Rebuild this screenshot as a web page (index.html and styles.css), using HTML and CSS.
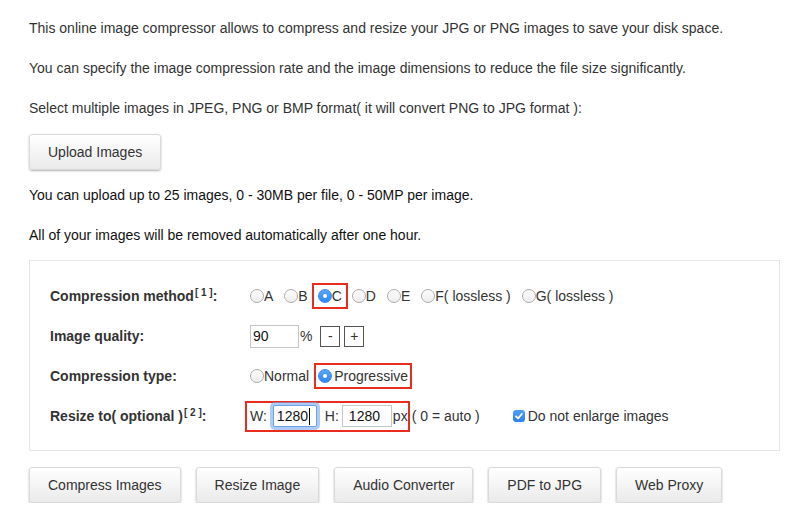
FILE: index.html
```html
<!DOCTYPE html>
<html>
<head>
<meta charset="utf-8">
<link rel="stylesheet" href="styles.css">
</head>
<body>
<div class="page">
  <p class="intro">This online image compressor allows to compress and resize your JPG or PNG images to save your disk space.</p>
  <p class="intro">You can specify the image compression rate and the image dimensions to reduce the file size significantly.</p>
  <p class="intro">Select multiple images in JPEG, PNG or BMP format( it will convert PNG to JPG format ):</p>
  <button class="btn upload">Upload Images</button>
  <p class="note first">You can upload up to 25 images, 0 - 30MB per file, 0 - 50MP per image.</p>
  <p class="note">All of your images will be removed automatically after one hour.</p>

  <div class="panel">
    <div class="row">
      <div class="label">Compression method<sup>[ 1 ]</sup>:</div>
      <div class="ctrl">
        <label class="opt"><span class="radio"></span>A</label>
        <label class="opt"><span class="radio"></span>B</label>
        <label class="opt boxed box-c"><span class="radio on"></span>C</label>
        <label class="opt"><span class="radio"></span>D</label>
        <label class="opt"><span class="radio"></span>E</label>
        <label class="opt"><span class="radio"></span>F( lossless )</label>
        <label class="opt"><span class="radio"></span>G( lossless )</label>
      </div>
    </div>
    <div class="row">
      <div class="label">Image quality:</div>
      <div class="ctrl">
        <span class="field quality">90</span>
        <span class="pct">%</span>
        <span class="step">-</span>
        <span class="step plus">+</span>
      </div>
    </div>
    <div class="row">
      <div class="label">Compression type:</div>
      <div class="ctrl">
        <label class="opt normal"><span class="radio"></span>Normal</label>
        <label class="opt boxed box-p"><span class="radio on"></span>Progressive</label>
      </div>
    </div>
    <div class="row">
      <div class="label">Resize to( optional )<sup>[ 2 ]</sup>:</div>
      <div class="ctrl">
        <span class="resize-box">
          <span>W:</span>
          <span class="field size focus">1280<span class="caret"></span></span>
          <span class="h-lbl">H:</span>
          <span class="field size hfield">1280</span>
          <span class="px">px</span>
        </span>
        <span class="auto">( 0 = auto )</span>
        <label class="check-opt"><span class="check"><svg viewBox="0 0 12 12" width="12" height="12"><path d="M3 6.3 L5.1 8.4 L9 3.8" fill="none" stroke="#fff" stroke-width="1.7" stroke-linecap="round" stroke-linejoin="round"/></svg></span>Do not enlarge images</label>
      </div>
    </div>
  </div>

  <div class="tools">
    <button class="btn">Compress Images</button>
    <button class="btn">Resize Image</button>
    <button class="btn">Audio Converter</button>
    <button class="btn">PDF to JPG</button>
    <button class="btn">Web Proxy</button>
  </div>
</div>
</body>
</html>
```

FILE: styles.css
```css
* { box-sizing: border-box; }
html, body { margin: 0; padding: 0; background: #fff; }
body {
  font-family: "Liberation Sans", Arial, Helvetica, sans-serif;
  font-size: 14px;
  color: #333;
}
.page {
  padding: 18px 30px 0 29px;
}
p { margin: 0; line-height: 20px; }
.intro { margin-bottom: 20px; }
.intro:nth-of-type(3) { margin-bottom: 16px; }
.note { color: #111; margin-bottom: 20px; }
.note.first { margin-top: 15px; }
.note:last-of-type { margin-bottom: 15px; }

.btn {
  display: inline-flex;
  align-items: center;
  justify-content: center;
  height: 36px;
  padding: 0 18px;
  font-family: "Liberation Sans", Arial, Helvetica, sans-serif;
  font-size: 14px;
  color: #333;
  background: linear-gradient(#ffffff, #eaeaea);
  border: 1px solid #dadada;
  border-radius: 3px;
  box-shadow: 0 1px 2px rgba(0,0,0,0.3);
  cursor: pointer;
}
.upload { display: flex; }

.panel {
  border: 1px solid #e6e6e6;
  padding: 15px 20px 14px 20px;
}
.row {
  display: flex;
  align-items: center;
  height: 40px;
}
.label {
  width: 200px;
  flex: none;
  font-weight: bold;
  color: #333;
}
.label sup {
  font-size: 10px;
  font-weight: bold;
  vertical-align: 5px;
  line-height: 0;
  margin-left: 1px;
}
.ctrl {
  display: flex;
  align-items: center;
  white-space: nowrap;
}

.opt {
  display: inline-flex;
  align-items: center;
  margin-right: 11px;
}
.radio {
  display: inline-block;
  width: 14px;
  height: 14px;
  border-radius: 50%;
  border: 1px solid #adadad;
  background: linear-gradient(#fdfdfd, #eeeeee);
  position: relative;
  flex: none;
}
.radio.on {
  border-color: #3a8ef0;
  background: linear-gradient(#5aa6fb, #2f86f2);
}
.radio.on::after {
  content: "";
  position: absolute;
  left: 4px; top: 4px;
  width: 4px; height: 4px;
  border-radius: 50%;
  background: #fff;
}
.boxed {
  border: 2px solid #ea2b1f;
  height: 26px;
}
.box-c {
  margin-left: -7px;
  margin-right: 4px;
  padding: 0 4px 0 4px;
}
.normal { margin-right: 5px; }
.box-p {
  padding: 0 2px 0 2px;
}
.box-p .radio { margin-right: 2px; }

.field {
  display: inline-flex;
  align-items: center;
  height: 23px;
  border: 1px solid #c8c8c8;
  background: #fff;
  color: #111;
  padding-left: 2px;
}
.quality { width: 49px; }
.pct { margin-left: 1px; }
.step {
  display: inline-flex;
  align-items: center;
  justify-content: center;
  width: 20px;
  height: 21px;
  border: 1px solid #555;
  margin-left: 8px;
  font-size: 14px;
  color: #333;
  background: #fff;
}
.step.plus { margin-left: 4px; }

.resize-box {
  display: inline-flex;
  align-items: center;
  border: 2px solid #ea2b1f;
  height: 31px;
  padding: 0 0 0 3px;
  margin-left: -5px;
}
.size { width: 50px; height: 22px; padding-left: 6px; }
.focus {
  width: 44px;
  margin-left: 6px;
  padding-left: 3px;
  border: 1px solid #6aa1e8;
  border-radius: 2px;
  box-shadow: 0 0 0 3px rgba(120, 170, 240, 0.6);
}
.caret {
  display: inline-block;
  width: 1px;
  height: 17px;
  background: #000;
  margin-left: 1px;
}
.h-lbl { margin-left: 8px; }
.hfield { margin-left: 3px; }
.px { margin-left: 1px; }
.auto { margin-left: 2px; }
.check-opt {
  display: inline-flex;
  align-items: center;
  margin-left: 33px;
}
.check {
  display: inline-flex;
  width: 12px;
  height: 12px;
  border-radius: 3px;
  background: linear-gradient(#4ea0fb, #2b82f0);
  margin-right: 3px;
}

.tools {
  display: flex;
  gap: 15px;
  margin-top: 16px;
}
```
